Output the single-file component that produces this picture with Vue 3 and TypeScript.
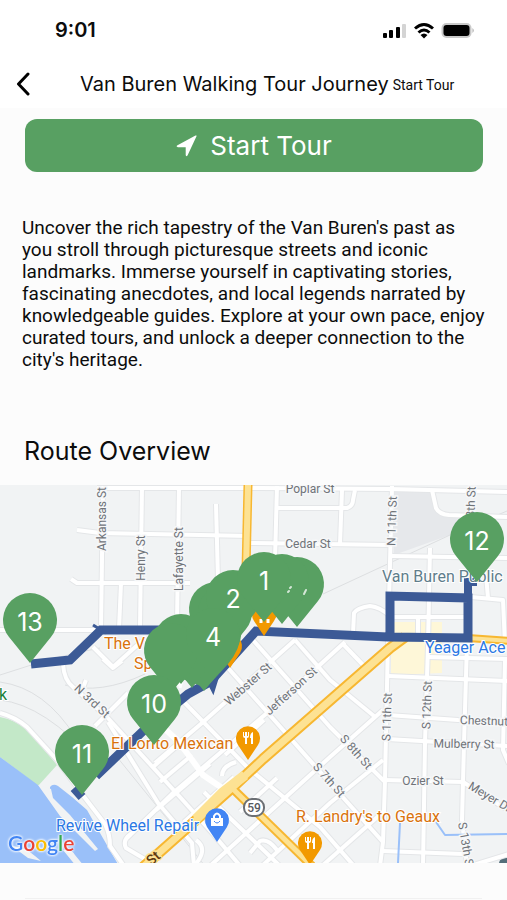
<script setup lang="ts">
interface Pin { x: number; y: number; n?: string }
interface StreetLabel { x: number; y: number; text: string; turn: number }
interface Place { x: number; y: number; text: string; tone: string }

const pins: Pin[] = [
  { x: 30, y: 620, n: '13' },
  { x: 477, y: 539, n: '12' },
  { x: 297, y: 584 },
  { x: 282, y: 581 },
  { x: 216, y: 609 },
  { x: 225, y: 612 },
  { x: 233, y: 597, n: '2' },
  { x: 264, y: 579, n: '1' },
  { x: 204, y: 648 },
  { x: 192, y: 645 },
  { x: 181, y: 641 },
  { x: 171, y: 650 },
  { x: 213, y: 635, n: '4' },
  { x: 154, y: 702, n: '10' },
  { x: 82, y: 752, n: '11' },
]

const minorRoads: string[] = [
  'M97 488 H260 L390 489 L507 492',
  'M103 486 L101 629', 'M77 530 L100 533 L250 536', 'M142 486 L140 627',
  'M179 486 L177 625', 'M71 579 L77 583 H190', 'M121 583 L119 629',
  'M0 630 H97', 'M93 647 L113 667 L142 641', 'M216 504 L218 580',
  'M277 486 L275 560', 'M277 508 H341', 'M250 543 L392 545', 'M342 490 L340 544',
  'M330 508 H347 Q353 506 353 500 L355 490',
  'M392 486 L388 640 L385 780 L383 842 L380 866',
  'M432 490 L436 508 Q439 514 449 515 L507 517', 'M392 556 L507 558',
  'M430 548 L428 645 L425 743 L423 866',
  'M353 634 L354 613 Q357 608 370 606 Q380 607 390 616', 'M393 617 H466',
  'M418 617 V636', 'M471 597 L503 600 L505 645', 'M486 575 L488 598',
  'M467 643 L464 743 L462 820 L467 866', 'M505 660 L503 750 L509 764',
  'M428 657 L509 659', 'M388 676 L509 681', 'M388 715 L458 720 L509 722',
  'M387 739 L509 746', 'M384 780 L463 782 L509 811', 'M383 851 L463 854', 'M470 866 L509 854',
  'M63 664 Q64 680 73 687 L107 717 L180 797 L214 835 L242 868',
  'M253 640 L330 727 L384 781', 'M295 640 L330 680 L374 716', 'M342 643 L366 668',
  'M221 660 L268 713 L330 783 L383 842', 'M182 700 L248 768 L320 827 L354 866',
  'M155 763 L202 723 L295 640', 'M127 838 L173 793 L267 713 L345 642',
  'M95 726 L128 693', 'M108 722 L158 803 L192 843 L194 866',
  'M153 767 L185 739', 'M160 782 L192 755', 'M156 810 L210 764', 'M184 822 L234 777',
  'M204 792 L230 818 L282 868', 'M225 755 L264 720', 'M300 728 L344 690',
  'M383 710 L330 757 L210 866', 'M383 760 L330 803 L262 866', 'M383 812 L322 866',
  'M277 778 L240 812', 'M222 776 Q222 766 236 762', 'M192 868 Q210 850 196 840',
  'M250 853 L260 841 Q268 838 277 850', 'M0 713 Q15 717 27 727 L57 760 L82 794 L105 824 Q110 834 110 846 L124 866',
  'M160 868 L126 848 Q122 840 131 834', 'M103 659 L113 668 L122 661', 'M83 688 L86 680',
]

const railways: string[] = [
  'M323 594 L450 535 L507 511', 'M0 682 Q45 688 76 738', 'M65 685 Q100 695 145 674',
  'M100 648 Q60 655 0 675', 'M117 757 L168 820 L205 866', 'M0 700 Q45 705 96 763',
]

const streets: StreetLabel[] = [
  { x: 102, y: 519, text: 'Arkansas St', turn: -90 },
  { x: 141, y: 558, text: 'Henry St', turn: -90 },
  { x: 179, y: 559, text: 'Lafayette St', turn: -90 },
  { x: 310, y: 489, text: 'Poplar St', turn: 0 },
  { x: 308, y: 544, text: 'Cedar St', turn: 0 },
  { x: 392, y: 521, text: 'N 11th St', turn: -88 },
  { x: 471, y: 502, text: '8th St', turn: -88 },
  { x: 92, y: 701, text: 'N 3rd St', turn: 43 },
  { x: 248, y: 684, text: 'Webster St', turn: -41 },
  { x: 291, y: 691, text: 'Jefferson St', turn: -42 },
  { x: 387, y: 717, text: 'S 11th St', turn: -88 },
  { x: 427, y: 705, text: 'S 12th St', turn: -88 },
  { x: 356, y: 752, text: 'S 8th St', turn: 48 },
  { x: 329, y: 780, text: 'S 7th St', turn: 48 },
  { x: 491, y: 721, text: 'Chestnut St', turn: 2 },
  { x: 464, y: 744, text: 'Mulberry St', turn: 1 },
  { x: 423, y: 781, text: 'Ozier St', turn: 0 },
  { x: 490, y: 797, text: 'Meyer Dr', turn: 31 },
  { x: 466, y: 846, text: 'S 13th St', turn: 80 },
]

const places: Place[] = [
  { x: 104, y: 649, text: 'The Vault', tone: 'food' },
  { x: 134, y: 669, text: 'Spirits', tone: 'food' },
  { x: 111, y: 749, text: 'El Lorito Mexican', tone: 'food' },
  { x: 296, y: 822, text: "R. Landry's to Geaux", tone: 'food' },
  { x: 56, y: 831, text: 'Revive Wheel Repair', tone: 'shop' },
  { x: 425, y: 653, text: 'Yeager Ace', tone: 'shop' },
  { x: 382, y: 582, text: 'Van Buren Public L', tone: 'civic' },
  { x: -1, y: 700, text: 'k', tone: 'park' },
]

const foodPins: Pin[] = [
  { x: 264, y: 614 }, { x: 230, y: 646 }, { x: 248, y: 738 }, { x: 310, y: 843 },
]

const pinShape = 'M0 43 L-21 17 A27 27 0 1 1 21 17 Z'
const poiShape = 'M0 22 L-10 7 A12 12 0 1 1 10 7 Z'
const blurb = "Uncover the rich tapestry of the Van Buren's past as you stroll through picturesque streets and iconic landmarks. Immerse yourself in captivating stories, fascinating anecdotes, and local legends narrated by knowledgeable guides. Explore at your own pace, enjoy curated tours, and unlock a deeper connection to the city's heritage."
</script>

<template>
  <div class="screen">
    <div class="status">
      <span class="clock">9:01</span>
      <svg class="signals" viewBox="0 0 92 18" aria-hidden="true">
        <rect x="0" y="12" width="4" height="5" rx="1" />
        <rect x="6" y="9" width="4" height="8" rx="1" />
        <rect x="13" y="6" width="4" height="11" rx="1" />
        <rect x="19" y="3" width="4" height="14" rx="1" fill="#d4d4d4" />
        <g fill="none" stroke="#000" stroke-width="3">
          <path d="M32 7.500 Q41 -.5 50 7.500" />
          <path d="M35.500 11.500 Q41 6.500 46.500 11.500" />
        </g>
        <path d="M37.500 14 Q41 11 44.500 14 L41 17.500 Z" />
        <rect x="58.500" y="2" width="30" height="15" rx="5" fill="#c9c9c9" />
        <rect x="60.500" y="4" width="26" height="11" rx="3" />
        <path d="M89.500 7 Q92 9.500 89.500 12 Z" fill="#aaa" />
      </svg>
    </div>

    <header class="bar">
      <button class="back" type="button" aria-label="Back">
        <svg viewBox="0 0 14 24"><path d="M12 2 L2.500 12 L12 22" fill="none" stroke="#000" stroke-width="3" stroke-linecap="round" stroke-linejoin="round" /></svg>
      </button>
      <h1 class="title">Van Buren Walking Tour Journey</h1>
      <span class="sub">Start Tour</span>
    </header>

    <main class="content">
      <button class="start" type="button">
        <svg viewBox="0 0 22 22" aria-hidden="true"><path d="M20.500 1.200 L11.500 20.500 Q10 22 9.700 20 V12.200 H2 Q-.5 11.500 1.500 10.300 L19.500 .6 Q21 .2 20.500 1.200 Z" fill="#fff" /></svg>
        <span>Start Tour</span>
      </button>
      <p class="blurb">{{ blurb }}</p>
      <h2 class="heading">Route Overview</h2>

      <svg class="map" viewBox="0 485 507 378" role="img" aria-label="Route map">
        <rect y="485" width="507" height="378" fill="#f1f3f4" />
        <path d="M394 491 H431 L437 512 L468 517 L450 535 L394 555 Z" fill="#e6e8eb" />
        <path d="M391 622 H442 V673 L391 675 Z" fill="#fef7d8" />
        <path d="M0 717 Q17 720 29 732 L57 765 L38 786 L0 757 Z" fill="#c3e8c8" />
        <path d="M0 757 L38 785 L50 796 L50 787 Q53 783 58 786 L72 797 L87 810 L100 833 L119 866 H0 Z" fill="#9ac0f9" />
        <path d="M38 785 L51 789 L53 798 L70 815 L98 849 L95 851 L60 816 Z M12 846 Q25 847 35 856 L41 861 L28 858 Z M63 850 Q72 849 75 855 L84 866 H76 Z" fill="#f1f3f4" />
        <path d="M499 863 Q500 857 507 858 V863 Z" fill="#546e7a" />

        <g fill="none" stroke-linejoin="round">
          <path v-for="d in railways" :key="d" :d="d" stroke="#dddfe1" stroke-width="1" />
          <path v-for="d in minorRoads" :key="'c' + d" :d="d" stroke="#e4e6e8" stroke-width="6" />
          <path v-for="d in minorRoads" :key="d" :d="d" stroke="#fff" stroke-width="4" />
          <path d="M152 717 L177 740 L190 757 L203 775 L228 792" stroke="#fff" stroke-width="6" />
          <path d="M400 823 L398 863 M436 822 L445 835 L507 834" stroke="#9ac0f9" stroke-width="2" />
          <g stroke="#f7b731">
            <path d="M248 485 L246 570" stroke-width="9" />
            <path d="M405 637 L390 648 L263 759 L232 788 L142 868" stroke-width="11" />
            <path d="M232 788 L312 866" stroke-width="9" />
            <path d="M468 638 L509 641" stroke-width="8" />
          </g>
          <g stroke="#fde293">
            <path d="M248 485 L246 570" stroke-width="6" />
            <path d="M405 637 L390 648 L263 759 L232 788 L142 868" stroke-width="7" />
            <path d="M232 788 L312 866" stroke-width="5" />
            <path d="M468 638 L509 641" stroke-width="4" />
            <path d="M245 775 L222 793 L196 819" stroke-width="10" />
          </g>
          <g stroke="#3c5a96" stroke-width="9" stroke-linejoin="miter">
            <path d="M31 664 L70 660 L101 630 H185" />
            <path d="M93 625 L106 633" stroke-width="3" />
            <path d="M74 788 L82 797 M96 776 L142 732 L188 694 L210 682 L256 631 L388 637 L468 638 V598 L390 596 V637" />
            <path d="M210 684 L213 690 L217 677" stroke-width="4" />
            <path d="M468 600 V582 H477" stroke-width="8" />
          </g>
        </g>

        <g class="street">
          <text v-for="s in streets" :key="s.text" :transform="`translate(${s.x} ${s.y}) rotate(${s.turn})`" y="4" text-anchor="middle">{{ s.text }}</text>
          <text class="amber" transform="translate(153 858) rotate(-40)" y="5" text-anchor="middle">St</text>
        </g>
        <rect x="244" y="799" width="20" height="17" rx="8" fill="#fff" stroke="#6b6f74" stroke-width="2" />
        <text class="shield" x="254" y="812" text-anchor="middle">59</text>

        <text v-for="p in places" :key="p.text" class="place" :class="p.tone" :x="p.x" :y="p.y">{{ p.text }}</text>

        <g v-for="p in foodPins" :key="`${p.x}-${p.y}`" :transform="`translate(${p.x} ${p.y})`">
          <path :d="poiShape" fill="#f29900" />
          <path d="M-5 -6 V-2 Q-5 0 -3 0 V6 H-1 V0 Q1 0 1 -2 V-6 H0 V-2 H-1 V-6 H-3 V-2 H-4 V-6 Z M5 -6 Q2 -5 2 0 H3 V6 H5 Z" fill="#fff" />
        </g>
        <g transform="translate(217 820)">
          <path :d="poiShape" fill="#4285f4" />
          <path d="M-6 -2 H6 V6 H-6 Z" fill="#fff" />
          <path d="M-3 -2 V-4 Q0 -9 3 -4 V-2" fill="none" stroke="#fff" stroke-width="2" />
          <path d="M-3 1 Q0 5 3 1" fill="none" stroke="#4285f4" stroke-width="1" />
        </g>

        <path d="M253 615 L278 615 L270 624 H258 Z" fill="#f29900" />
        <path d="M261 619 V623 M268 619 V623 M177 685 L181 684 L180 688" fill="none" stroke="#fff" stroke-width="3" />
        <path d="M190 630 H242 Q240 650 228 664 L206 688 L180 678 Z" fill="#58a062" />
        <g v-for="p in pins" :key="`${p.x}/${p.y}`" :transform="`translate(${p.x} ${p.y})`">
          <path :d="pinShape" fill="#58a062" />
          <text v-if="p.n" class="num" y="11" text-anchor="middle">{{ p.n }}</text>
        </g>
        <path d="M291 587 L290 588 M289 591 L288 592 M306 590 L304 594" stroke="#fff" stroke-width="2" stroke-linecap="round" opacity=".75" />

        <text class="google" x="8" y="851"><tspan fill="#4285f4">G</tspan><tspan fill="#ea4335">o</tspan><tspan fill="#fbbc05">o</tspan><tspan fill="#4285f4">g</tspan><tspan fill="#34a853">l</tspan><tspan fill="#ea4335">e</tspan></text>
      </svg>
      <div class="next"></div>
    </main>
  </div>
</template>

<style>
body {
  margin: 0;
  background: #fcfcfc;
}
</style>

<style scoped>
.screen {
  min-height: 100vh;
  box-sizing: border-box;
  overflow: hidden;
  color: #0c0c0c;
  font-family: Roboto, "Liberation Sans", sans-serif;
}
.status {
  display: flex;
  justify-content: space-between;
  align-items: center;
  height: 60px;
  padding: 0 32px 0 55px;
  background: #fff;
}
.clock {
  font: 600 20px/24px Inter, sans-serif;
}
.signals {
  width: 92px;
  height: 18px;
}
.bar {
  display: flex;
  align-items: center;
  height: 48px;
  padding: 0 16px;
  background: #fff;
}
.back {
  display: flex;
  flex: 0 0 64px;
  padding: 0;
  border: 0;
  background: none;
}
.back svg {
  width: 14px;
  height: 24px;
}
.title {
  margin: 0 4px 0 0;
  font: 400 20px/28px Inter, sans-serif;
  white-space: nowrap;
}
.sub {
  padding-top: 2px;
  font-size: 14px;
  white-space: nowrap;
}
.content {
  padding-top: 11px;
}
.start {
  display: flex;
  align-items: center;
  justify-content: center;
  gap: 12px;
  width: calc(100% - 49px);
  height: 53px;
  margin: 0 24px 0 25px;
  padding: 0;
  border: 0;
  border-radius: 12px;
  background: #58a062;
  color: #fff;
  font: 400 26px/32px Inter, sans-serif;
}
.start svg {
  width: 22px;
  height: 22px;
}
.blurb {
  margin: 45px 22px 0;
  font-size: 19px;
  line-height: 22px;
}
.heading {
  margin: 64px 24px 18px;
  font: 400 25px/32px Inter, sans-serif;
}
.map {
  display: block;
  width: 100%;
  height: auto;
}
.street {
  fill: #6f7378;
  stroke: #f6f7f8;
  stroke-width: 3px;
  paint-order: stroke;
  font: 12px Roboto, sans-serif;
}
.amber {
  fill: #5f3b12;
  stroke: #fde293;
  font-size: 14px;
  font-weight: 500;
}
.shield {
  fill: #55595e;
  stroke: none;
  font: 500 12px Roboto, sans-serif;
}
.place {
  stroke: #fff;
  stroke-width: 2px;
  paint-order: stroke;
  font: 16px Roboto, sans-serif;
}
.food {
  fill: #d9720d;
}
.shop {
  fill: #2b78e4;
}
.civic {
  fill: #607d8b;
}
.park {
  fill: #188038;
}
.num {
  fill: #fff;
  font: 400 25px Inter, sans-serif;
}
.google {
  filter: drop-shadow(0 0 1px #fff) drop-shadow(0 0 1px #fff);
  font: 600 21px Lato, sans-serif;
}
.next {
  height: 20px;
  margin: 35px 25px 0;
  border-top: 1px solid #f1f1f1;
}
</style>
